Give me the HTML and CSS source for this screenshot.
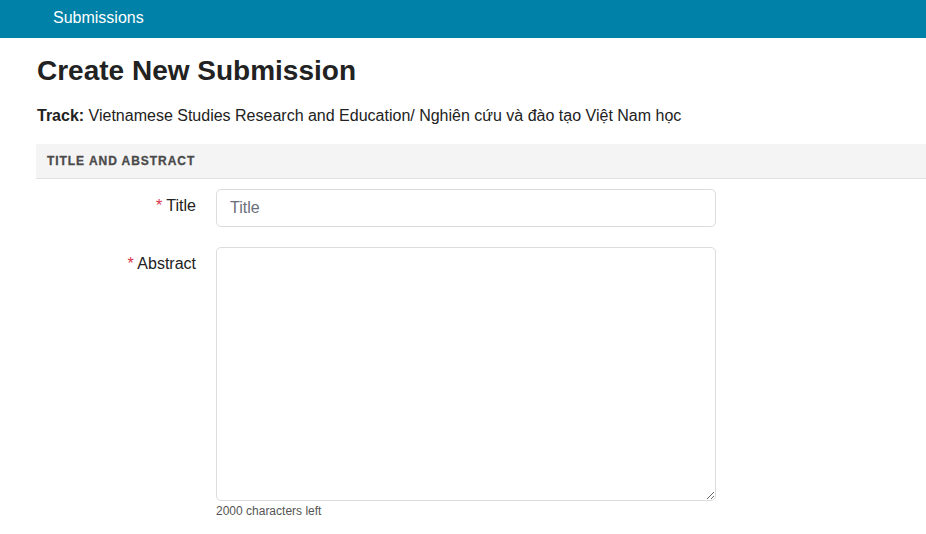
FILE: index.html
```html
<!DOCTYPE html>
<html>
<head>
<meta charset="utf-8">
<link rel="stylesheet" href="styles.css">
</head>
<body>
<div class="navbar"><span class="brand">Submissions</span></div>
<div class="main">
  <h1 class="page-title">Create New Submission</h1>
  <p class="track"><b>Track:</b> Vietnamese Studies Research and Education/ Nghiên cứu và đào tạo Việt Nam học</p>
  <div class="section-head">TITLE AND ABSTRACT</div>
  <div class="form">
    <div class="row">
      <label class="label"><span class="req">*</span> Title</label>
      <div class="field"><input class="input" type="text" placeholder="Title"></div>
    </div>
    <div class="row">
      <label class="label"><span class="req">*</span> Abstract</label>
      <div class="field">
        <textarea class="textarea"></textarea>
        <div class="help">2000 characters left</div>
      </div>
    </div>
  </div>
</div>
</body>
</html>
```
FILE: styles.css
```css
html, body {
  margin: 0;
  padding: 0;
  background: #fff;
  font-family: "Liberation Sans", Arial, sans-serif;
  color: #222;
}
.navbar {
  height: 38px;
  background: #0081a7;
  display: flex;
  align-items: center;
  padding-left: 53px;
  box-sizing: border-box;
}
.brand {
  color: #fff;
  font-size: 16px;
  margin-top: -3px;
}
.main {
  padding-left: 36px;
}
.page-title {
  font-size: 28px;
  font-weight: bold;
  margin: 17px 0 0 1px;
  line-height: 32px;
  color: #222;
}
.track {
  font-size: 16px;
  margin: 19px 0 0 1px;
  line-height: 20px;
}
.section-head {
  margin-top: 18px;
  height: 34px;
  background: #f4f4f4;
  border-bottom: 1px solid #e2e2e2;
  font-size: 12px;
  font-weight: bold;
  color: #4a4a4a;
  padding-left: 11px;
  display: flex;
  align-items: center;
  letter-spacing: 0.95px;
  -webkit-text-stroke: 0.3px #4a4a4a;
}
.form {
  padding-top: 10px;
}
.row {
  display: flex;
  gap: 20px;
  margin-bottom: 20px;
}
.label {
  width: 160px;
  text-align: right;
  font-size: 16px;
  padding-top: 8px;
  color: #222;
}
.req {
  color: #d9334a;
}
.field {
  width: 500px;
}
.input {
  box-sizing: border-box;
  width: 500px;
  height: 38px;
  border: 1px solid #dcdcdf;
  border-radius: 5px;
  padding: 0 13px;
  font-family: "Liberation Sans", Arial, sans-serif;
  font-size: 16px;
  color: #222;
  display: block;
}
.input::placeholder {
  color: #6b6f7b;
}
.textarea {
  box-sizing: border-box;
  width: 500px;
  height: 254px;
  border: 1px solid #dcdcdf;
  border-radius: 5px;
  display: block;
  margin: 0;
  font-family: "Liberation Sans", Arial, sans-serif;
}
.help {
  font-size: 12px;
  color: #555;
  margin-top: 3px;
}
```
